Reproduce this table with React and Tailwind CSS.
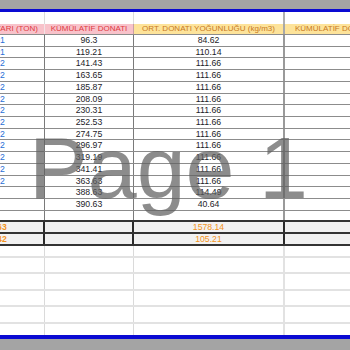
import React from "react";

const data = [
  ["22.91", "96.3", "84.62"],
  ["22.91", "119.21", "110.14"],
  ["22.22", "141.43", "111.66"],
  ["22.22", "163.65", "111.66"],
  ["22.22", "185.87", "111.66"],
  ["22.22", "208.09", "111.66"],
  ["22.22", "230.31", "111.66"],
  ["22.22", "252.53", "111.66"],
  ["22.22", "274.75", "111.66"],
  ["22.22", "296.97", "111.66"],
  ["22.22", "319.19", "111.66"],
  ["22.22", "341.41", "111.66"],
  ["22.22", "363.63", "111.66"],
  ["", "388.63", "114.49"],
  ["", "390.63", "40.64"],
];

const blankHeights = ["h-[12px]", "h-[16px]", "h-[16.7px]", "h-[16.3px]", "h-[16.7px]"];

export default function App() {
  return (
    <div
      className="relative w-[350px] h-[350px] overflow-hidden bg-white"
      style={{ fontFamily: '"Liberation Sans", Arial, sans-serif' }}
    >
      <div className="h-[9px] bg-[#a4a4a4]" />
      <div className="h-[3px] bg-[#0a0ad2]" />

      <div className="flex flex-col h-[323px] overflow-hidden">
        {/* spacer row */}
        <div className="flex h-[11.5px] shrink-0">
          <div className="w-[101px] -ml-[56px] shrink-0 border-r border-[#dcdcdc]" />
          <div className="w-[89px] shrink-0 border-r border-[#dcdcdc]" />
          <div className="w-[151px] shrink-0 border-r-2 border-[#b0b0b0]" />
          <div className="flex-1" />
        </div>

        {/* header row */}
        <div className="flex h-[11.5px] shrink-0 text-[8px] leading-none whitespace-nowrap border-b border-[#8c8c8c]">
          <div className="w-[101px] -ml-[56px] shrink-0 border-r border-[#f3e3e6] bg-[#f8c2ca] text-[#e0393f] flex items-center justify-center overflow-hidden">
            DONATI MİKTARI (TON)
          </div>
          <div className="w-[89px] shrink-0 border-r border-[#c8a0a6] bg-[#f8c2ca] text-[#e0393f] flex items-center justify-center overflow-hidden">
            KÜMÜLATİF DONATI
          </div>
          <div className="w-[151px] shrink-0 border-r-2 border-[#a8a8a8] bg-[#fde39a] text-[#c8791f] flex items-center justify-center overflow-hidden">
            ORT. DONATI YOĞUNLUĞU (kg/m3)
          </div>
          <div className="flex-1 bg-[#fde39a] text-[#c8791f] flex items-center pl-[10px] overflow-hidden">
            KÜMÜLATİF DONATI YOĞUNLUĞU (kg/m3)
          </div>
        </div>

        {/* data rows */}
        {data.map((r, i) => (
          <div
            key={i}
            className="flex h-[11.733px] shrink-0 text-[8.7px] leading-none whitespace-nowrap border-b border-[#8c8c8c]"
          >
            <div className="w-[101px] -ml-[56px] shrink-0 border-r border-[#7a7a7a] text-[#2a6fd6] flex items-center justify-center">
              {r[0]}
            </div>
            <div className="w-[89px] shrink-0 border-r border-[#7a7a7a] text-[#1c1c28] flex items-center justify-center">
              {r[1]}
            </div>
            <div className="w-[151px] shrink-0 border-r-2 border-[#9a9a9a] text-[#1c1c28] flex items-center justify-center">
              {r[2]}
            </div>
            <div className="flex-1" />
          </div>
        ))}

        {/* empty row */}
        <div className="flex h-[11.3px] shrink-0 border-b-2 border-[#333333]">
          <div className="w-[101px] -ml-[56px] shrink-0 border-r border-[#7a7a7a]" />
          <div className="w-[89px] shrink-0 border-r border-[#7a7a7a]" />
          <div className="w-[151px] shrink-0 border-r-2 border-[#9a9a9a]" />
          <div className="flex-1" />
        </div>

        {/* totals */}
        {[
          ["390.63", "1578.14"],
          ["26.042", "105.21"],
        ].map((t, i) => (
          <div
            key={i}
            className="flex h-[12px] shrink-0 bg-[#f1f1f1] text-[8.7px] leading-none whitespace-nowrap border-b-2 border-[#333333] text-[#f39422]"
          >
            <div className="w-[101px] -ml-[56px] shrink-0 border-r-2 border-[#2a2a2a] flex items-center justify-center font-bold">
              {t[0]}
            </div>
            <div className="w-[89px] shrink-0 border-r-2 border-[#2a2a2a]" />
            <div className="w-[151px] shrink-0 border-r-2 border-[#2a2a2a] flex items-center justify-center">
              {t[1]}
            </div>
            <div className="flex-1" />
          </div>
        ))}

        {/* blank rows */}
        {blankHeights.map((h, i) => (
          <div key={i} className={`flex ${h} shrink-0 border-b-2 border-[#e2e2e2]`}>
            <div className="w-[101px] -ml-[56px] shrink-0 border-r border-[#dadada]" />
            <div className="w-[89px] shrink-0 border-r border-[#dadada]" />
            <div className="w-[151px] shrink-0 border-r-2 border-[#e2e2e2]" />
            <div className="flex-1" />
          </div>
        ))}
        <div className="flex flex-1">
          <div className="w-[101px] -ml-[56px] shrink-0 border-r border-[#dadada]" />
          <div className="w-[89px] shrink-0 border-r border-[#dadada]" />
          <div className="w-[151px] shrink-0 border-r-2 border-[#e2e2e2]" />
          <div className="flex-1" />
        </div>
      </div>

      <div className="h-[4px] bg-[#0a0ad2]" />
      <div className="h-[11px] bg-[#a4a4a4]" />

      {/* watermark */}
      <div
        className="absolute left-[29px] top-[123.5px] text-[88px] leading-none whitespace-nowrap pointer-events-none text-[rgba(96,96,96,0.72)]"
      >
        Page 1
      </div>
    </div>
  );
}
